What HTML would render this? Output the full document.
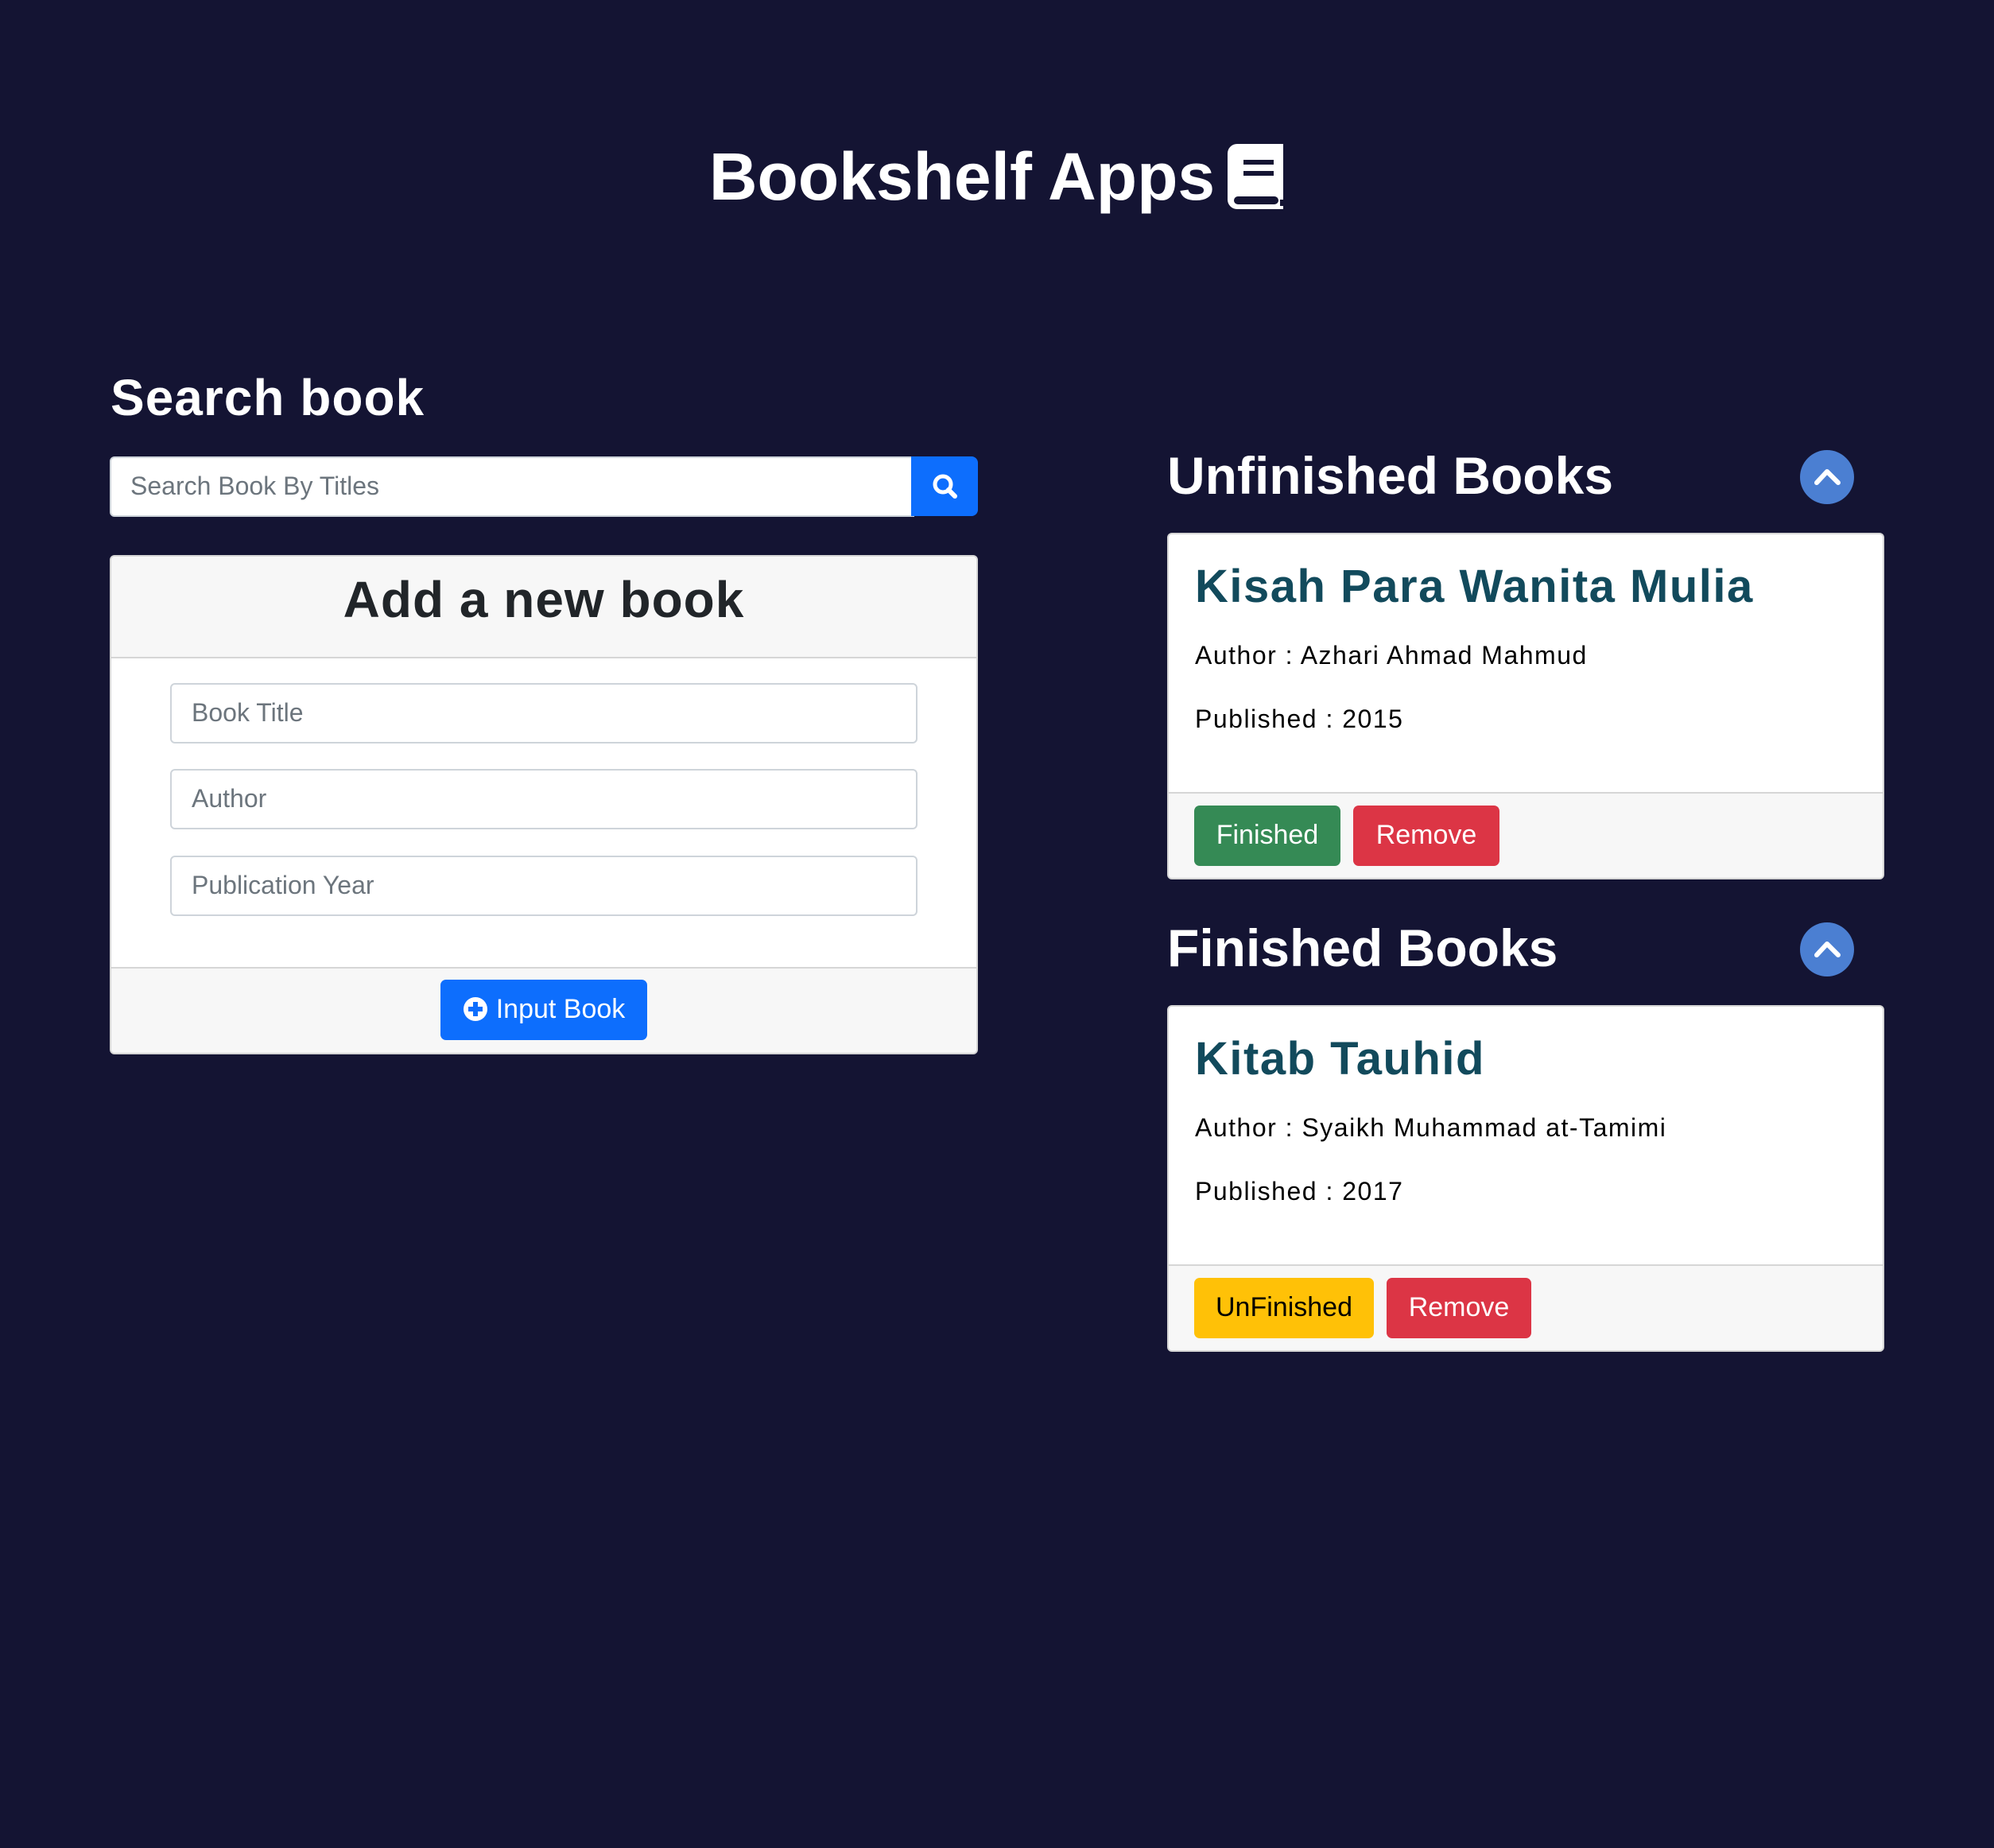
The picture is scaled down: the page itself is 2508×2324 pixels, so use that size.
<!DOCTYPE html>
<html><head><meta charset="utf-8"><style>
*{box-sizing:border-box;margin:0;padding:0}
body{width:2508px;height:2324px;background:#141433;font-family:"Liberation Sans","DejaVu Sans",sans-serif;position:relative;overflow:hidden}
.a{position:absolute}
h1{position:absolute;left:0;width:2508px;top:172px;text-align:center;color:#fff;font-size:84px;font-weight:bold;line-height:100px;letter-spacing:0}
h1 svg{vertical-align:-12px;margin-left:16px}
.h2{color:#fff;font-weight:bold;font-size:66px;line-height:80px}
.inp{background:#fff;border:2px solid #ced4da;border-radius:6px;color:#6c757d;font-size:32px;padding-left:25px;display:flex;align-items:center;padding-bottom:2px}
.card{background:#fff;border:2px solid #d6d6d6;border-radius:6px;overflow:hidden}
.btn{border-radius:7px;font-size:34px;display:flex;align-items:center;justify-content:center;color:#fff;padding-bottom:2px}
.t{color:#124a5c;font-weight:bold;font-size:58px;line-height:70px;letter-spacing:1.5px}
.p{color:#000;font-size:32px;line-height:40px;letter-spacing:1.5px}
.circ{width:68px;height:68px;border-radius:50%;background:#4b7fd2}
</style></head><body>
<h1>Bookshelf Apps<svg width="72" height="82" viewBox="0 0 72 82"><path d="M12 0H70V70H66V78H70V82H12A12 12 0 0 1 0 70V12A12 12 0 0 1 12 0Z" fill="#fff"/><rect x="8" y="66" width="56" height="10" rx="5" fill="#141433"/><rect x="20" y="20" width="38" height="6" fill="#141433"/><rect x="20" y="34" width="38" height="6" fill="#141433"/></svg></h1>

<div class="a h2" style="left:139px;top:460px;font-size:64px;letter-spacing:1px">Search book</div>
<div class="a inp" style="left:138px;top:574px;width:1012px;height:76px;border-radius:6px 0 0 6px;padding-left:24px">Search Book By Titles</div>
<div class="a" style="left:1146px;top:574px;width:84px;height:75px;background:#0d6efd;border-radius:0 8px 8px 0">
<svg width="84" height="75" viewBox="0 0 84 75"><circle cx="40" cy="35" r="10" stroke="#fff" stroke-width="5" fill="none"/><line x1="47" y1="42" x2="55" y2="50" stroke="#fff" stroke-width="6" stroke-linecap="round"/></svg></div>

<div class="a card" style="left:138px;top:698px;width:1092px;height:628px;">
 <div style="position:absolute;left:0;top:0;width:100%;height:128px;background:#f7f7f7;border-bottom:2px solid #d6d6d6;text-align:center;color:#212529;font-weight:bold;font-size:64px;line-height:108px;letter-spacing:1px">Add a new book</div>
 <div class="a inp" style="left:74px;top:159px;width:940px;height:76px">Book Title</div>
 <div class="a inp" style="left:74px;top:267px;width:940px;height:76px">Author</div>
 <div class="a inp" style="left:74px;top:376px;width:940px;height:76px">Publication Year</div>
 <div style="position:absolute;left:0;top:516px;width:100%;height:112px;background:#f7f7f7;border-top:2px solid #d6d6d6"></div>
 <div class="a btn" style="left:414px;top:532px;width:260px;height:76px;background:#0d6efd;font-size:34px"><svg width="32" height="32" viewBox="0 0 32 32" style="margin-right:10px"><circle cx="16" cy="16" r="15" fill="#fff"/><rect x="13" y="7" width="6" height="18" fill="#0d6efd"/><rect x="7" y="13" width="18" height="6" fill="#0d6efd"/></svg>Input Book</div>
</div>

<div class="a h2" style="left:1468px;top:558px">Unfinished Books</div>
<div class="a circ" style="left:2264px;top:566px"><svg width="68" height="68"><polyline points="21,41 34,27 48,41" stroke="#fff" stroke-width="6" fill="none" stroke-linecap="round" stroke-linejoin="round"/></svg></div>
<div class="a card" style="left:1468px;top:670px;width:902px;height:436px">
 <div class="a t" style="left:33px;top:31px">Kisah Para Wanita Mulia</div>
 <div class="a p" style="left:33px;top:132px">Author : Azhari Ahmad Mahmud</div>
 <div class="a p" style="left:33px;top:212px">Published : 2015</div>
 <div style="position:absolute;left:0;top:324px;width:100%;height:112px;background:#f7f7f7;border-top:2px solid #d6d6d6"></div>
 <div class="a btn" style="left:32px;top:341px;width:184px;height:76px;background:#358a55">Finished</div>
 <div class="a btn" style="left:232px;top:341px;width:184px;height:76px;background:#dc3545">Remove</div>
</div>

<div class="a h2" style="left:1468px;top:1152px">Finished Books</div>
<div class="a circ" style="left:2264px;top:1160px"><svg width="68" height="68"><polyline points="21,41 34,27 48,41" stroke="#fff" stroke-width="6" fill="none" stroke-linecap="round" stroke-linejoin="round"/></svg></div>
<div class="a card" style="left:1468px;top:1264px;width:902px;height:436px">
 <div class="a t" style="left:33px;top:31px">Kitab Tauhid</div>
 <div class="a p" style="left:33px;top:132px">Author : Syaikh Muhammad at-Tamimi</div>
 <div class="a p" style="left:33px;top:212px">Published : 2017</div>
 <div style="position:absolute;left:0;top:324px;width:100%;height:112px;background:#f7f7f7;border-top:2px solid #d6d6d6"></div>
 <div class="a btn" style="left:32px;top:341px;width:226px;height:76px;background:#ffc107;color:#000">UnFinished</div>
 <div class="a btn" style="left:274px;top:341px;width:182px;height:76px;background:#dc3545">Remove</div>
</div>
</body></html>
